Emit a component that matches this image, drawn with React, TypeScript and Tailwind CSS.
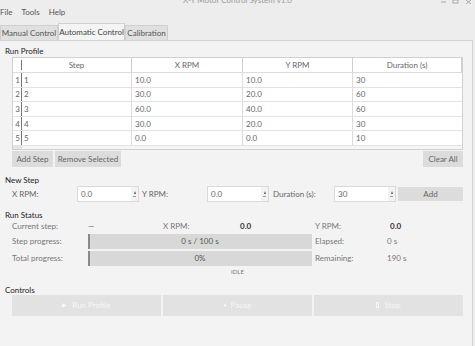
import React from "react";

const rows = [
  ["1", "10.0", "10.0", "30"],
  ["2", "30.0", "20.0", "60"],
  ["3", "60.0", "40.0", "60"],
  ["4", "30.0", "20.0", "30"],
  ["5", "0.0", "0.0", "10"],
];

function Spin({ value, w }: { value: string; w: string }) {
  return (
    <div className={`flex h-[16px] ${w} border border-[#dadada] bg-white`}>
      <div className="flex flex-1 items-center pl-[3px] text-[#666]">{value}</div>
      <div className="flex w-[7px] flex-col items-center justify-center gap-[2px] bg-[#f3f3f3]">
        <div className="h-0 w-0 border-x-[1.5px] border-b-[3px] border-x-transparent border-b-[#555]" />
        <div className="h-[1px] w-[3px] bg-[#999]" />
      </div>
    </div>
  );
}

export default function App() {
  return (
    <div
      className="relative h-[346px] w-[475px] overflow-hidden whitespace-nowrap bg-[#ededed] text-[8px] leading-none text-[#444]"
      style={{ fontFamily: 'Lato, "Noto Sans", sans-serif' }}
    >
      {/* title bar */}
      <div className="relative h-[6px] overflow-hidden">
        <div className="mt-[-4px] text-center text-[8px] text-[#999]">X-Y Motor Control System v1.0</div>
        <svg className="absolute right-[2px] top-0" width="32" height="4" viewBox="0 0 32 4">
          <line x1="0" y1="2" x2="5" y2="2" stroke="#aaa" strokeWidth="1" />
          <rect x="12" y="0" width="5" height="3" fill="none" stroke="#aaa" strokeWidth="1" />
          <line x1="25" y1="0" x2="30" y2="4" stroke="#aaa" strokeWidth="1" />
          <line x1="30" y1="0" x2="25" y2="4" stroke="#aaa" strokeWidth="1" />
        </svg>
      </div>
      {/* menu */}
      <div className="flex h-[12px] items-center gap-[9px] text-[#555]">
        <span>File</span>
        <span>Tools</span>
        <span>Help</span>
      </div>
      {/* tabs */}
      <div className="mt-[6px] flex h-[16px] items-end">
        <div className="flex h-[15px] w-[58px] items-center justify-center border border-b-0 border-[#cfcfcf] bg-[#e0e0e0] text-[#555]">
          Manual Control
        </div>
        <div className="flex h-[17px] w-[67px] items-center justify-center border border-b-0 border-[#cfcfcf] bg-[#f4f4f4] text-[#444]">
          Automatic Control
        </div>
        <div className="flex h-[15px] w-[43px] items-center justify-center border border-b-0 border-[#cfcfcf] bg-[#e0e0e0] text-[#555]">
          Calibration
        </div>
      </div>
      {/* panel */}
      <div className="h-[306px] w-[473px] border-r border-t border-[#d4d4d4] bg-[#f3f3f3] px-[12px]">
        <div className="ml-[-7px] flex h-[16px] items-end pb-[2px] text-[#222]">Run Profile</div>
        {/* table */}
        <div className="w-[451px] border border-[#d0d0d0] bg-white">
          <div className="flex h-[15px] border-b border-[#dcdcdc] text-[#666]">
            <div className="flex w-[9px] justify-end">
              <div className="my-[2px] w-[1px] bg-[#777]" />
            </div>
            <div className="flex w-[110px] items-center justify-center border-r border-[#cfcfcf]">Step</div>
            <div className="flex w-[111px] items-center justify-center border-r border-[#cfcfcf]">X RPM</div>
            <div className="flex w-[110px] items-center justify-center border-r border-[#cfcfcf]">Y RPM</div>
            <div className="flex w-[109px] items-center justify-center border-r border-[#cfcfcf]">Duration (s)</div>
          </div>
          {rows.map((r, i) => (
            <div key={i} className="flex h-[14.6px] border-b border-[#e2e2e2] text-[#666]">
              <div className="flex w-[9px] items-center justify-end border-r border-[#777] pr-[1px]">{i + 1}</div>
              <div className="flex w-[110px] items-center border-r border-[#dcdcdc] pl-[2px]">{r[0]}</div>
              <div className="flex w-[111px] items-center border-r border-[#dcdcdc] pl-[3px]">{r[1]}</div>
              <div className="flex w-[110px] items-center border-r border-[#dcdcdc] pl-[3px]">{r[2]}</div>
              <div className="flex w-[109px] items-center pl-[3px]">{r[3]}</div>
            </div>
          ))}
          <div className="flex h-[3px] bg-[#f6f6f6]">
            <div className="w-[9px] bg-[#e4e4e4]" />
          </div>
        </div>
        {/* buttons */}
        <div className="mt-[1px] flex h-[16px] w-[451px] gap-[2px]">
          <div className="flex w-[41px] items-center justify-center bg-[#dcdcdc] text-[#666]">Add Step</div>
          <div className="flex w-[66px] items-center justify-center bg-[#dcdcdc] text-[#666]">Remove Selected</div>
          <div className="flex-1" />
          <div className="flex w-[40px] items-center justify-center bg-[#dcdcdc] text-[#666]">Clear All</div>
        </div>
        {/* new step */}
        <div className="ml-[-7px] mt-[9px] text-[#222]">New Step</div>
        <div className="mt-[1px] flex h-[18px] w-[451px] items-center text-[#666]">
          <div className="w-[65px]">X RPM:</div>
          <Spin value="0.0" w="w-[62px]" />
          <div className="w-[68px] pl-[3px]">Y RPM:</div>
          <Spin value="0.0" w="w-[62px]" />
          <div className="w-[65px] pl-[4px]">Duration (s):</div>
          <Spin value="30" w="w-[62px]" />
          <div className="ml-[2px] flex h-[14px] flex-1 items-center justify-center bg-[#dcdcdc] text-[#666]">Add</div>
        </div>
        {/* run status */}
        <div className="ml-[-7px] mt-[8px] text-[#222]">Run Status</div>
        <div className="flex h-[14px] items-center text-[#777]">
          <div className="w-[76px]">Current step:</div>
          <div className="w-[75px] text-[#555]">—</div>
          <div className="w-[77px]">X RPM:</div>
          <div className="w-[75px] font-bold text-[#333]">0.0</div>
          <div className="w-[75px]">Y RPM:</div>
          <div className="font-bold text-[#333]">0.0</div>
        </div>
        <div className="mt-[1px] flex h-[15px] items-center text-[#777]">
          <div className="w-[76px]">Step progress:</div>
          <div className="relative flex h-[15px] w-[224px] items-center justify-center bg-[#d8d8d8] text-[#555]">
            <div className="absolute bottom-0 left-0 top-0 w-[2px] bg-[#888]" />
            0 s / 100 s
          </div>
          <div className="w-[75px] pl-[3px]">Elapsed:</div>
          <div>0 s</div>
        </div>
        <div className="mt-[2px] flex h-[15px] items-center text-[#777]">
          <div className="w-[76px]">Total progress:</div>
          <div className="relative flex h-[15px] w-[224px] items-center justify-center bg-[#d8d8d8] text-[#555]">
            <div className="absolute bottom-0 left-0 top-0 w-[2px] bg-[#888]" />
            0%
          </div>
          <div className="w-[75px] pl-[3px]">Remaining:</div>
          <div>190 s</div>
        </div>
        <div className="mt-[3px] w-[451px] text-center text-[6px] text-[#777]">IDLE</div>
        {/* controls */}
        <div className="ml-[-7px] mt-[11px] text-[#222]">Controls</div>
        <div className="mt-[1px] flex h-[21px] w-[451px] gap-[2px] text-[#f7f7f7]">
          <div className="flex w-[149px] items-center justify-center gap-[5px] bg-[#e2e2e2]">
            <span className="text-[6px]">▶</span>
            <span>Run Profile</span>
          </div>
          <div className="flex w-[149px] items-center justify-center gap-[4px] bg-[#e2e2e2]">
            <span className="text-[5px]">●</span>
            <span>Pause</span>
          </div>
          <div className="flex flex-1 items-center justify-center gap-[5px] bg-[#e2e2e2]">
            <span className="inline-block h-[6px] w-[3px] border border-[#f7f7f7]" />
            <span>Stop</span>
          </div>
        </div>
      </div>
    </div>
  );
}
